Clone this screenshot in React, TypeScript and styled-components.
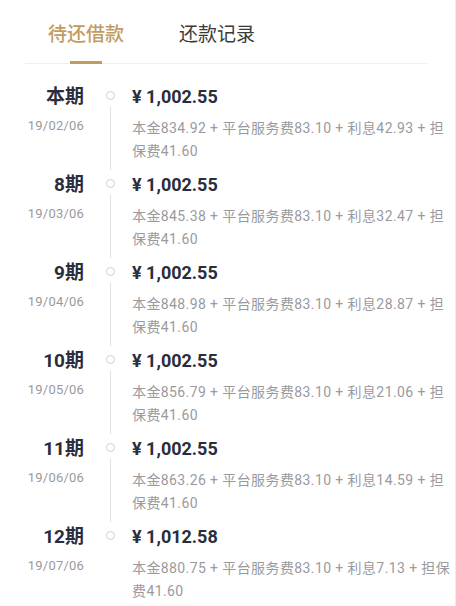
import React from "react";
import styled, { createGlobalStyle } from "styled-components";

const Global = createGlobalStyle`
  html, body { margin: 0; padding: 0; background: #fff; overflow: hidden; }
  body { font-family: "Roboto", "Noto Sans CJK SC", sans-serif; }
`;

const Page = styled.div`
  width: 456px;
  height: 606px;
  box-sizing: border-box;
  border-right: 1px solid #ececec;
  background: #fff;
  overflow: hidden;
`;

const TabBar = styled.div`
  margin: 0 28px 0 25px;
  height: 64px;
  box-sizing: border-box;
  border-bottom: 1px solid #f0f0f0;
  display: flex;
  gap: 55px;
  padding-left: 23px;
`;

const Tab = styled.div<{ $active?: boolean }>`
  position: relative;
  font-family: "Noto Sans CJK SC", sans-serif;
  font-size: 19px;
  line-height: 26px;
  padding-top: 20px;
  color: ${(p) => (p.$active ? "#c29b5f" : "#3a3a3a")};
  font-weight: ${(p) => (p.$active ? 500 : 400)};
  &::after {
    content: "";
    display: ${(p) => (p.$active ? "block" : "none")};
    position: absolute;
    left: 50%;
    bottom: -1px;
    transform: translateX(-50%);
    width: 32px;
    height: 3px;
    background: #c29b5f;
  }
`;

const List = styled.div`
  padding-top: 20px;
`;

const Row = styled.div`
  display: grid;
  grid-template-columns: 84px 48px 319px;
`;

const Left = styled.div`
  display: flex;
  flex-direction: column;
  align-items: flex-end;
`;

const Period = styled.div`
  font-family: "Roboto", "Noto Sans CJK SC", sans-serif;
  font-size: 19px;
  font-weight: 700;
  line-height: 26px;
  color: #2b2d3c;
`;

const DateText = styled.div`
  margin-top: 7px;
  font-size: 13px;
  line-height: 18px;
  color: #9a9a9e;
  letter-spacing: 0.2px;
`;

const Track = styled.div`
  display: flex;
  flex-direction: column;
  align-items: center;
  padding: 7px 8px 0 12px;
`;

const Dot = styled.div`
  width: 7px;
  height: 7px;
  border-radius: 50%;
  border: 1.5px solid #cfd1d7;
  box-sizing: content-box;
`;

const Line = styled.div<{ $hidden?: boolean }>`
  flex: 1;
  width: 1px;
  margin: 6px 0 2px;
  background: ${(p) => (p.$hidden ? "transparent" : "#e2e3e8")};
`;

const Content = styled.div`
  padding-bottom: 9px;
`;

const Amount = styled.div`
  font-size: 18px;
  font-weight: 700;
  line-height: 26px;
  color: #2b2d3c;
`;

const Detail = styled.div`
  margin-top: 7px;
  font-size: 14px;
  line-height: 23px;
  letter-spacing: 0.4px;
  color: #9a9a9e;
`;

const rows = [
  { p: "本期", d: "19/02/06", a: "¥ 1,002.55", t: "本金834.92 + 平台服务费83.10 + 利息42.93 + 担保费41.60" },
  { p: "8期", d: "19/03/06", a: "¥ 1,002.55", t: "本金845.38 + 平台服务费83.10 + 利息32.47 + 担保费41.60" },
  { p: "9期", d: "19/04/06", a: "¥ 1,002.55", t: "本金848.98 + 平台服务费83.10 + 利息28.87 + 担保费41.60" },
  { p: "10期", d: "19/05/06", a: "¥ 1,002.55", t: "本金856.79 + 平台服务费83.10 + 利息21.06 + 担保费41.60" },
  { p: "11期", d: "19/06/06", a: "¥ 1,002.55", t: "本金863.26 + 平台服务费83.10 + 利息14.59 + 担保费41.60" },
  { p: "12期", d: "19/07/06", a: "¥ 1,012.58", t: "本金880.75 + 平台服务费83.10 + 利息7.13 + 担保费41.60" },
];

export default function App() {
  return (
    <Page>
      <Global />
      <TabBar>
        <Tab $active>待还借款</Tab>
        <Tab>还款记录</Tab>
      </TabBar>
      <List>
        {rows.map((r, i) => (
          <Row key={r.p}>
            <Left>
              <Period>{r.p}</Period>
              <DateText>{r.d}</DateText>
            </Left>
            <Track>
              <Dot />
              <Line $hidden={i === rows.length - 1} />
            </Track>
            <Content>
              <Amount>{r.a}</Amount>
              <Detail>{r.t}</Detail>
            </Content>
          </Row>
        ))}
      </List>
    </Page>
  );
}
